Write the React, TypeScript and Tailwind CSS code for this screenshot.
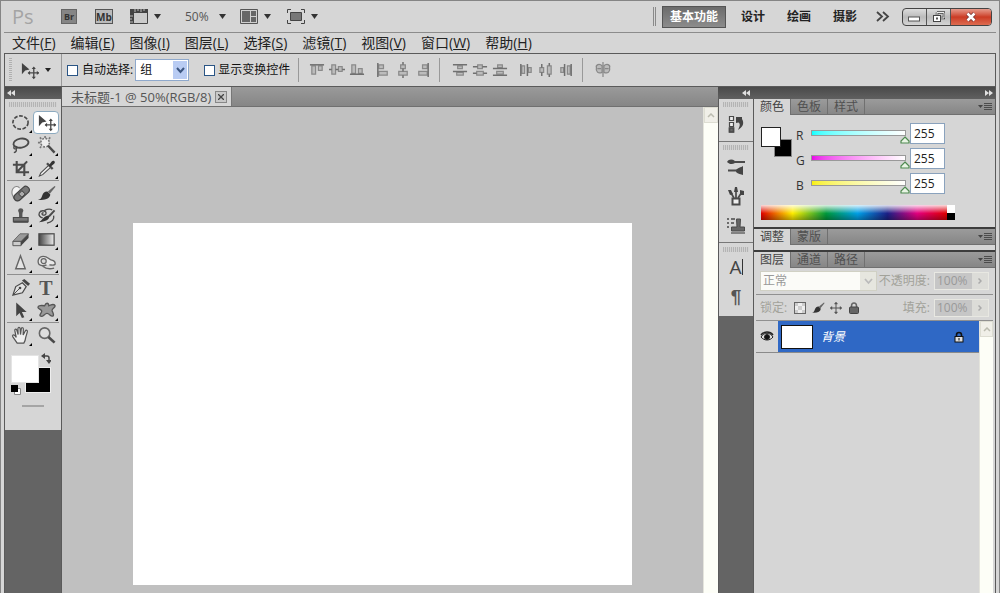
import React, { useState } from 'react';

const menus = [
  { label: '文件', key: 'F' },
  { label: '编辑', key: 'E' },
  { label: '图像', key: 'I' },
  { label: '图层', key: 'L' },
  { label: '选择', key: 'S' },
  { label: '滤镜', key: 'T' },
  { label: '视图', key: 'V' },
  { label: '窗口', key: 'W' },
  { label: '帮助', key: 'H' },
];

const workspaces = ['基本功能', '设计', '绘画', '摄影'];

interface IconProps {
  children: React.ReactNode;
  className?: string;
}

// 20x20 drawing area shared by the tool and dock icons
const Icon: React.FC<IconProps> = ({ children, className = 'w-5 h-5' }) => (
  <svg viewBox="0 0 20 20" className={`${className} shrink-0`} fill="none" stroke="#4a4a4a" strokeWidth="1.7">
    {children}
  </svg>
);

const MoveGlyph = () => (
  <>
    <path d="M2 2v12l3.500-4L10 9z" fill="#444" stroke="none" />
    <path d="M14.500 7v11M9 12.500h11" strokeWidth="1.400" />
    <path d="M14.500 5.800l-2.200 2.600h4.400zM14.500 19.200l-2.200-2.600h4.400zM8 12.500l2.600-2.200v4.400zM20 12.500l-2.300-2.200v4.400z" fill="#444" stroke="none" />
  </>
);

const BrushGlyph = () => (
  <>
    <path d="M18.500 2L11.500 8l2 2.300L19.500 3z" fill="#666" stroke="none" />
    <path d="M11 8l3 3c-.5 4-5 6.500-13 5.500 3-.6 3.500-1.500 4.500-4.500C6.500 9.500 8.500 7.700 11 8z" fill="#333" stroke="none" />
  </>
);

const StampGlyph = () => (
  <>
    <path d="M7.500 3.500a2.800 2.800 0 0 1 5.500 0c0 1.500-1 2-1 4v3H8.500v-3c0-2-1-2.500-1-4z" fill="#555" stroke="none" />
    <path d="M2.500 11h15.500v4.500H2.500z" fill="#777" strokeWidth="1.200" />
    <path d="M2.500 15.500h15.500" strokeWidth="2.200" />
  </>
);

interface Tool {
  id: string;
  name: string;
  flyout?: boolean;
  glyph: React.ReactNode;
}

const toolGroups: Tool[][] = [
  [
    { id: 'marquee', name: '椭圆选框工具', flyout: true, glyph: <ellipse cx="10" cy="10" rx="8" ry="7" strokeDasharray="4 1.600" /> },
    { id: 'move', name: '移动工具', glyph: <MoveGlyph /> },
    {
      id: 'lasso', name: '套索工具', flyout: true,
      glyph: <><ellipse cx="10.500" cy="7.500" rx="8" ry="4.800" transform="rotate(-10 10.500 7.500)" strokeWidth="2" /><path d="M4 10.500c-2 1-1 3.500 1 3s1.500-3-.5-2.500M5.500 13.500c.5 2-.5 3.500-2.500 4" strokeWidth="1.400" /></>,
    },
    {
      id: 'wand', name: '魔棒工具', flyout: true,
      glyph: <><circle cx="8.500" cy="7" r="4.500" fill="#eee" stroke="#777" strokeDasharray="2 1.500" /><path d="M8.500 0v2M1 7h2.500M3 1.500l1.500 1.500M14 1.500L12.500 3M3 12.500L4.500 11" stroke="#777" /><path d="M11.500 10l7 7.500" strokeWidth="2.500" /></>,
    },
    { id: 'crop', name: '裁剪工具', flyout: true, glyph: <path d="M6 2v12h13M2 6h12v12M6 14L17 2.500" strokeWidth="2.200" /> },
    {
      id: 'eyedropper', name: '吸管工具', flyout: true,
      glyph: <><path d="M12 7L4 14.500 2.500 18 6 16.500 14 9" fill="#eee" strokeWidth="1.100" /><path d="M10.500 4.500l6 6" strokeWidth="2.500" /><path d="M12.500 6.500l3-4c2-2 4.500.5 2.500 2.500l-4 3.500z" fill="#333" stroke="none" /></>,
    },
  ],
  [
    {
      id: 'healing', name: '污点修复画笔工具', flyout: true,
      glyph: <><path d="M5 16C1 14 0 8 2 5s5-3 7-1" stroke="#888" fill="#f4f4f4" strokeWidth="1.200" /><rect x="1.500" y="6.500" width="19" height="7.500" rx="3.700" transform="rotate(-42 11 10)" fill="#777" stroke="#444" strokeWidth="1.200" /><path d="M8 10.500l3.500-3.500 3.500 3.500-3.500 3.500z" fill="#aaa" stroke="#333" strokeWidth="1" /></>,
    },
    { id: 'brush', name: '画笔工具', flyout: true, glyph: <BrushGlyph /> },
    { id: 'stamp', name: '仿制图章工具', flyout: true, glyph: <StampGlyph /> },
    {
      id: 'history', name: '历史记录画笔工具', flyout: true,
      glyph: <><path d="M7 6.500c-1.500-1-2.500 1-1 1.800s4 0 3.500-2.300C9 3.500 4 3 2.500 6S4 11 6 11.500M8 3.500c3-1.500 6-1.500 8-.5M17.500 9c1 4-1.500 7-7 8" strokeWidth="1.400" /><path d="M18.500 3.500l-6 6.500" strokeWidth="2" /><path d="M12 9c2 2 .5 6-10 7 3.500-1.500 4-6 10-7z" fill="#333" stroke="none" /></>,
    },
    {
      id: 'eraser', name: '橡皮擦工具', flyout: true,
      glyph: <><path d="M2 12L9.500 4h9l-8 8z" fill="#999" stroke="#666" strokeWidth="1" /><path d="M2 12h8.500v4.500H2z" fill="#ccc" stroke="#555" strokeWidth="1" /><path d="M10.500 12l8-8v4.500l-8 8z" fill="#444" stroke="none" /></>,
    },
    {
      id: 'gradient', name: '渐变工具', flyout: true,
      glyph: <><defs><linearGradient id="toolGradient"><stop stopColor="#444" /><stop offset="1" stopColor="#eee" /></linearGradient></defs><rect x="2" y="4" width="16" height="12" fill="url(#toolGradient)" strokeWidth="1.300" /></>,
    },
    { id: 'sharpen', name: '锐化工具', flyout: true, glyph: <path d="M10 3L5 16.500h10z" fill="#e4e4e4" stroke="#666" strokeWidth="1.500" /> },
    {
      id: 'sponge', name: '海绵工具', flyout: true,
      glyph: <><path d="M2 12C0 8 2 3.500 6.500 3.500c5 0 6 3.500 9 4 2.500.5 4 2 3.500 4.500-2 1.500-4 .5-6 .5M2 12c3 2 6 1.500 8 .5M6 14c3 2.500 8 3 12 2" fill="#e8e8e8" stroke="#666" strokeWidth="1.400" /><circle cx="7" cy="8.500" r="2.700" fill="#d8d8d8" stroke="#666" strokeWidth="1.300" /></>,
    },
  ],
  [
    {
      id: 'pen', name: '钢笔工具', flyout: true,
      glyph: <><path d="M2 18l3-9 7-4 4 4-4 6.500z" fill="#e2e2e2" strokeWidth="1.300" /><path d="M11.500 2.500l6.500 6 2-2.500-6-5z" fill="#444" stroke="none" /><path d="M2 18l7-7" strokeWidth="1" /><circle cx="9.500" cy="10.500" r="1.400" fill="#444" stroke="none" /></>,
    },
    { id: 'type', name: '横排文字工具', flyout: true, glyph: null },
    { id: 'select', name: '路径选择工具', flyout: true, glyph: <path d="M5.500 1.500v14.500l3.500-3.500 2.500 5.500 2.500-1-2.500-5.500h5z" fill="#444" stroke="none" /> },
    {
      id: 'shape', name: '自定形状工具', flyout: true,
      glyph: <path d="M8 5c1.500-3.500 4-3.500 4.500 0 3-1.500 6-2 6.500 0s-4 3-3 5.500c1.500 3 2 5.500 0 5.500s-3-3-5.500-3-4 4-6.500 3 1-3 1-5.500c-1-2-4-2-4-4s4-2 7-1.500z" fill="#999" stroke="#555" strokeWidth="1.400" />,
    },
  ],
  [
    {
      id: 'hand', name: '抓手工具', flyout: true,
      glyph: <path d="M6.500 18L2 11.500c-1.200-2 .7-3 2-1.500l1.500 2L4 5c-.3-2 1.800-2.300 2.200-.5L7.500 9 7.300 3c0-2 2.200-2 2.300 0L10 9l.8-6c.3-1.700 2.400-1.500 2.200.3L12.800 9.500 15 5.300c1-1.600 2.700-.7 2.200.9L15.500 12c-.3 3-1 4.500-2 6z" fill="#eee" stroke="#555" strokeWidth="1.300" />,
    },
    { id: 'zoom', name: '缩放工具', glyph: <><circle cx="8" cy="7.500" r="5.500" fill="#ddd" stroke="#666" /><path d="M12 11.500l6.500 6" strokeWidth="2.800" /></> },
  ],
];

// Bars and boxes for the align and distribute buttons
const alignGroups: { name: string; d: string; line: string }[][] = [
  [
    { name: '顶对齐', d: 'M3 4h4v9H3zM10 4h4v5h-4z', line: 'M1 3h15' },
    { name: '垂直居中对齐', d: 'M3 3h4v10H3zM10 5h4v5h-4z', line: 'M0 8h3M7 8h3M14 8h3' },
    { name: '底对齐', d: 'M3 3h4v9H3zM10 7h4v5h-4z', line: 'M1 13h15' },
  ],
  [
    { name: '左对齐', d: 'M4 3h5v4H4zM4 10h9v4H4z', line: 'M3 1v15' },
    { name: '水平居中对齐', d: 'M6 3h5v4H6zM4 10h9v4H4z', line: 'M8.500 0v3M8.500 7v3M8.500 14v3' },
    { name: '右对齐', d: 'M8 3h5v4H8zM4 10h9v4H4z', line: 'M14 1v15' },
  ],
  [
    { name: '按顶分布', d: 'M6 4h5v3H6zM5 11h7v3H5z', line: 'M1 3h15M1 10h15' },
    { name: '垂直居中分布', d: 'M6 3h5v4H6zM5 10h7v4H5z', line: 'M1 5h5M11 5h5M1 12h4M12 12h4' },
    { name: '按底分布', d: 'M6 3h5v3H6zM5 10h7v3H5z', line: 'M1 7h15M1 14h15' },
  ],
  [
    { name: '按左分布', d: 'M4 4h3v8H4zM11 6h3v5h-3z', line: 'M3 2v13M10 2v13' },
    { name: '水平居中分布', d: 'M2 6h4v5H2zM10 4h4v9h-4z', line: 'M4 2v4M4 11v4M12 1v3M12 13v3' },
    { name: '按右分布', d: 'M3 6h3v5H3zM10 4h3v9h-3z', line: 'M7 2v13M14 2v13' },
  ],
];

const AlignButtons: React.FC<{ group: number }> = ({ group }) => (
  <div className="flex gap-1">
    {alignGroups[group].map(item => (
      <button key={item.name} aria-label={item.name} className="w-4">
        <svg viewBox="0 0 17 17" className="w-4 h-4" fill="none">
          <path d={item.d} fill="#bcbcbc" stroke="#8a8a8a" strokeWidth="1.300" />
          <path d={item.line} stroke="#707070" strokeWidth="1.600" />
        </svg>
      </button>
    ))}
  </div>
);

const Caret = () => (
  <svg viewBox="0 0 7 5" className="w-[7px] h-[5px] shrink-0" fill="#333">
    <path d="M0 0h7L3.500 5z" />
  </svg>
);

const DoubleArrow: React.FC<{ flip?: boolean }> = ({ flip }) => (
  <svg viewBox="0 0 8 6" className="w-2 h-1.5" fill="#e0e0e0">
    <path d={flip ? 'M0 0l4 3-4 3zM4 0l4 3-4 3z' : 'M4 0L0 3l4 3zM8 0L4 3l4 3z'} />
  </svg>
);

const Grip = () => (
  <div className="h-[5px] mx-1 bg-[repeating-linear-gradient(90deg,#b4b4b4_0px,#b4b4b4_1px,#d2d2d2_1px,#d2d2d2_2px)]" />
);

const TitleBar: React.FC = () => {
  const [workspace, setWorkspace] = useState('基本功能');

  return (
    <header className="flex items-center h-8 pl-2 pr-1 border-b border-[#8c8c8c]">
      <span className="w-[49px] text-[20px] leading-6 font-medium text-[#a4a4a4]">Ps</span>
      <button aria-label="Bridge" className="w-4 h-[15px] bg-[#858585] border border-[#666] text-[9px] leading-3 font-bold text-[#333]">Br</button>
      <button aria-label="Mini Bridge" className="w-[18px] h-[15px] ml-[18px] bg-[#bbb] border border-[#555] text-[10px] leading-3 font-bold text-[#333]">Mb</button>
      <button aria-label="查看额外内容" className="flex items-center gap-1.5 ml-[17px]">
        <svg viewBox="0 0 18 15" className="w-[18px] h-[15px]" fill="none">
          <path d="M.5.500h17v14H.500z" fill="#ccc" stroke="#444" />
          <path d="M0 0h18v4H4v11H0z" fill="#444" />
          <path d="M5 0v3M8 0v2M11 0v3M14 0v2M0 7h3M0 10h2M0 13h3" stroke="#bbb" />
        </svg>
        <Caret />
      </button>
      <button aria-label="缩放级别" className="flex items-center gap-2.5 ml-6 text-xs text-[#555]">
        50%
        <Caret />
      </button>
      <button aria-label="排列文档" className="flex items-center gap-1.5 ml-3.5">
        <svg viewBox="0 0 18 15" className="w-[18px] h-[15px]" fill="none">
          <path d="M.5.500h17v14H.500z" fill="#d0d0d0" stroke="#555" />
          <path d="M2 2h8v11H2zM11 2h5v5h-5zM11 8h5v5h-5z" fill="#666" />
        </svg>
        <Caret />
      </button>
      <button aria-label="屏幕模式" className="flex items-center gap-1.5 ml-4">
        <svg viewBox="0 0 18 15" className="w-[18px] h-[15px]" fill="none" stroke="#444">
          <path d="M.5 4V.500H4M14 .5h3.500V4M17.500 11v3.500H14M4 14.500H.500V11" />
          <path d="M3.500 3.500h11v8h-11z" fill="#777" />
        </svg>
        <Caret />
      </button>

      <div className="flex items-center ml-auto">
        <div className="w-[3px] h-[19px] mr-1.5 border-x border-[#8a8a8a]" />
        <nav className="flex items-center" aria-label="工作区">
          {workspaces.map(name => (
            <button
              key={name}
              onClick={() => setWorkspace(name)}
              className={`h-[22px] text-xs font-bold ${
                workspace === name
                  ? 'px-[7px] mr-1 bg-gradient-to-b from-[#6c6c6c] to-[#8c8c8c] border border-[#555] text-white'
                  : 'px-[11px] text-[#222]'
              }`}
            >
              {name}
            </button>
          ))}
        </nav>
        <button aria-label="更多工作区" className="ml-2 mr-3">
          <svg viewBox="0 0 14 11" className="w-3.5 h-[11px]" fill="none" stroke="#444" strokeWidth="1.800">
            <path d="M1 1l5 4.500L1 10M7 1l5 4.500L7 10" />
          </svg>
        </button>
        <div className="flex h-[18px] rounded-sm border border-[#444] overflow-hidden bg-gradient-to-b from-[#ddd] via-[#bbb] to-[#d4d4d4]">
          <button aria-label="最小化" className="flex items-center justify-center w-6 border-r border-[#555]">
            <svg viewBox="0 0 13 6" className="w-[13px] h-1.5 mt-1"><rect x=".5" y="1" width="11" height="4" fill="#fff" stroke="#555" /></svg>
          </button>
          <button aria-label="还原" className="flex items-center justify-center w-6 border-r border-[#555]">
            <svg viewBox="0 0 13 12" className="w-[13px] h-3" fill="none">
              <path d="M5 1.500h7v5.500H9M5 1.500V4" stroke="#444" strokeWidth="2.500" />
              <path d="M5 1.500h7v5.500H9M5 1.500V4" stroke="#eee" strokeWidth="1" />
              <rect x="1.500" y="4.500" width="7" height="6" stroke="#444" fill="#fff" />
              <rect x="4" y="6.500" width="2" height="2" fill="#555" />
            </svg>
          </button>
          <button aria-label="关闭" className="flex items-center justify-center w-10 bg-gradient-to-b from-[#e59a8c] via-[#cb3b24] to-[#dd6b50]">
            <svg viewBox="0 0 12 10" className="w-3 h-2.5" fill="none">
              <path d="M2.500 1.500l7 7M9.500 1.500l-7 7" stroke="#733" strokeWidth="4" />
              <path d="M2.500 1.500l7 7M9.500 1.500l-7 7" stroke="#fff" strokeWidth="2.500" />
            </svg>
          </button>
        </div>
      </div>
    </header>
  );
};

const MenuBar: React.FC = () => (
  <nav className="flex items-center gap-[15px] h-5 pl-2 text-sm leading-4 text-[#222]" aria-label="菜单">
    {menus.map(menu => (
      <button key={menu.key}>
        {menu.label}(<span className="underline">{menu.key}</span>)
      </button>
    ))}
  </nav>
);

const OptionsBar: React.FC = () => {
  const [autoSelect, setAutoSelect] = useState(false);
  const [showTransform, setShowTransform] = useState(false);

  return (
    <div className="flex items-center h-[34px] border border-[#5a5a5a] text-xs text-[#111]">
      <div className="flex items-center h-full w-[57px] pl-1 border-r border-[#999]">
        <div className="w-[3px] h-6 bg-[repeating-linear-gradient(180deg,#b0b0b0_0px,#b0b0b0_1px,#d8d8d8_1px,#d8d8d8_2px)]" />
        <button aria-label="移动工具预设" className="flex items-center gap-1.5 ml-2">
          <Icon className="w-[19px] h-[19px]"><MoveGlyph /></Icon>
          <svg viewBox="0 0 6 4" className="w-1.5 h-1" fill="#222"><path d="M0 0h6L3 4z" /></svg>
        </button>
      </div>
      <label className="flex items-center gap-1 ml-[5px]">
        <input
          type="checkbox"
          checked={autoSelect}
          onChange={e => setAutoSelect(e.target.checked)}
          className="appearance-none w-[11px] h-[11px] bg-white border border-[#2a5585] checked:bg-[#2a5585]"
        />
        自动选择:
      </label>
      <div className="relative w-[54px] h-[22px] ml-0.5">
        <select aria-label="自动选择对象" className="appearance-none w-full h-full pl-1 bg-white border border-[#8fa9cc]">
          <option>组</option>
          <option>图层</option>
        </select>
        <div className="absolute right-0.5 top-0.5 bottom-0.5 flex items-center justify-center w-3.5 bg-[#b9ccf3] pointer-events-none">
          <svg viewBox="0 0 9 7" className="w-[9px] h-[7px]" fill="none" stroke="#3c5680" strokeWidth="2"><path d="M1 1l3.500 4L8 1" /></svg>
        </div>
      </div>
      <label className="flex items-center gap-[3px] ml-[15px]">
        <input
          type="checkbox"
          checked={showTransform}
          onChange={e => setShowTransform(e.target.checked)}
          className="appearance-none w-[11px] h-[11px] bg-white border border-[#2a5585] checked:bg-[#2a5585]"
        />
        显示变换控件
      </label>
      <div className="w-px h-6 ml-2 mr-2.5 bg-[#999]" />
      <AlignButtons group={0} />
      <div className="w-2.5" />
      <AlignButtons group={1} />
      <div className="w-px h-6 ml-2 mr-3 bg-[#999]" />
      <AlignButtons group={2} />
      <div className="w-2.5" />
      <AlignButtons group={3} />
      <div className="w-px h-6 ml-2 mr-2.5 bg-[#999]" />
      <button aria-label="自动对齐图层">
        <svg viewBox="0 0 20 17" className="w-5 h-4" fill="#bcbcbc" stroke="#888" strokeWidth="1.300">
          <path d="M9 4C6 1 2 3 3 6c-1 4 2 7 6 5zM11 4c3-3 7-1 6 2 1 4-2 7-6 5z" />
          <path d="M10 0v16M4 7h4M12 7h4" />
        </svg>
      </button>
    </div>
  );
};

const Toolbox: React.FC = () => {
  const [active, setActive] = useState('move');

  return (
    <aside className="flex flex-col w-[58px] shrink-0 bg-[#646464] border-x border-[#5a5a5a]">
      <div className="flex items-center h-3 pl-0.5 bg-gradient-to-b from-[#4a4a4a] to-[#606060]">
        <DoubleArrow />
      </div>
      <div className="flex flex-col pt-[3px] pb-[23px] bg-[#d6d6d6]">
        <Grip />
        <div className="mt-1">
          {toolGroups.map((group, index) => (
            <div
              key={group[0].id}
              className={`grid grid-cols-[26px_26px] mx-0.5 ${index > 0 ? 'border-t border-[#8f8f8f] pt-px' : ''}`}
            >
              {group.map(tool => (
                <button
                  key={tool.id}
                  aria-label={tool.name}
                  onClick={() => setActive(tool.id)}
                  className={`relative flex items-center justify-center h-[23px] rounded-sm border ${
                    active === tool.id ? 'bg-white border-[#8daabf]' : 'border-transparent'
                  }`}
                >
                  {tool.id === 'type' ? (
                    <span className="font-['Liberation_Serif',serif] text-[20px] leading-5 font-bold text-[#555]">T</span>
                  ) : (
                    <Icon className="w-[19px] h-[19px]">{tool.glyph}</Icon>
                  )}
                  {tool.flyout && (
                    <svg viewBox="0 0 3 3" className="absolute right-0 bottom-0 w-[3px] h-[3px]"><path d="M3 0v3H0z" /></svg>
                  )}
                </button>
              ))}
            </div>
          ))}
        </div>
        {/* Foreground / background colours */}
        <div className="relative h-11 mt-1.5 mx-1.5">
          <button aria-label="背景色" className="absolute left-3.5 top-3.5 w-[26px] h-[26px] bg-black border border-[#eee]" />
          <button aria-label="前景色" className="absolute left-0 top-0.5 w-[28px] h-[28px] bg-white border border-[#e4e4e4]" />
          <button aria-label="切换颜色" className="absolute left-[30px] top-0">
            <svg viewBox="0 0 10 11" className="w-2.5 h-[11px]" fill="#444">
              <path d="M0 3l4-3v6zM8 11L5 7h6z" />
              <path d="M3 3h3q2 0 2 2v3" fill="none" stroke="#444" strokeWidth="1.500" />
            </svg>
          </button>
          <button aria-label="默认颜色" className="absolute left-0 top-8">
            <svg viewBox="0 0 10 10" className="w-2.5 h-2.5">
              <path d="M3.500 3.500h6v6h-6z" fill="#fff" stroke="#888" />
              <path d="M0 0h7v7H0z" />
            </svg>
          </button>
        </div>
        <div className="w-[22px] h-0.5 mt-2 mx-auto bg-[#a5a5a5]" />
      </div>
    </aside>
  );
};

const ScrollUp = () => (
  <button aria-label="向上滚动" className="flex items-center justify-center w-full h-4 bg-[#f0efe8] border border-[#ddddd2]">
    <svg viewBox="0 0 8 5" className="w-2 h-[5px]" fill="none" stroke="#bcbcb0" strokeWidth="1.500"><path d="M1 4l3-3 3 3" /></svg>
  </button>
);

const DocumentView: React.FC = () => (
  <main className="flex flex-col flex-1 min-w-0">
    <div className="flex h-5 bg-gradient-to-b from-[#9a9a9a] to-[#868686] border-b border-[#707070]">
      <div className="flex items-center gap-1 pl-[9px] pr-1 bg-[#d6d6d6] border-r border-[#777] text-[13px] leading-4 text-[#555]">
        <span className="whitespace-nowrap">未标题-1 @ 50%(RGB/8)</span>
        <button aria-label="关闭文档" className="flex items-center justify-center w-3 h-3 bg-[#c8c8c8] border border-[#888]">
          <svg viewBox="0 0 6 6" className="w-1.5 h-1.5" stroke="#444" strokeWidth="1.300"><path d="M0 0l6 6M6 0L0 6" /></svg>
        </button>
      </div>
    </div>
    <div className="flex flex-1 min-h-0 bg-[#c0c0c0]">
      <div className="flex flex-col flex-1 pt-29 pb-2">
        <div className="flex-1 w-[78%] mx-auto bg-white" />
      </div>
      <div className="w-[15px] bg-[#fdfef7] border-l border-[#e4e4dc]">
        <ScrollUp />
      </div>
    </div>
  </main>
);

const DockStrip: React.FC = () => (
  <div className="w-9 shrink-0 bg-[#646464] border-x border-[#5a5a5a]">
    <div className="flex flex-col items-center h-[43px] bg-[#d6d6d6] border-b border-[#777]">
      <div className="w-full pt-[3px]"><Grip /></div>
      <button aria-label="历史记录" className="my-auto">
        <Icon>
          <path d="M3.500 2.500h4v4h-4zM3.500 8.500h4v4h-4zM3.500 14h4v4h-4z" strokeWidth="1.200" fill="#eee" />
          <path d="M3.500 14h4v4h-4z" fill="#666" />
          <path d="M10 3h6v2c2.500 4 1 8-4 11 2-4 2.500-6 .5-7.500L10 9z" fill="#444" stroke="none" />
        </Icon>
      </button>
    </div>
    <div className="flex flex-col items-center h-[101px] bg-[#d6d6d6] border-b border-[#777]">
      <div className="w-full pt-[3px]"><Grip /></div>
      <div className="flex flex-col justify-between flex-1 py-1.5">
        <button aria-label="画笔预设">
          <Icon>
            <path d="M1 6c2-3 5-3 8-1v2C6 9 3 8 1 6zM10 14c3-3 6-3 7-4v9c-2-1-5-1-7-3z" fill="#444" stroke="none" />
            <path d="M8 6h11M2 14.500h9" strokeWidth="2" />
          </Icon>
        </button>
        <button aria-label="画笔">
          <Icon>
            <path d="M6.500 12.500h7v6h-7z" fill="#eee" strokeWidth="2" />
            <path d="M8 12L5 7M10 12V5M12 12l4-6" />
            <path d="M2 4l3 0 2 4-3 1zM9 1h2l1 5H8zM14 4l4 1v4l-4 0z" fill="#444" stroke="none" />
          </Icon>
        </button>
        <button aria-label="仿制源">
          <Icon>
            <path d="M1 3h2M5 3h4M1 7h2M5 7h3M1 11h2" />
            <path d="M10.500 3h4l-.5 8h4.500v4h-13v-4H11z" fill="#666" strokeWidth="1" />
            <path d="M5 17h14" strokeWidth="1.200" />
          </Icon>
        </button>
      </div>
    </div>
    <div className="flex flex-col items-center h-[73px] bg-[#d6d6d6]">
      <div className="w-full pt-1"><Grip /></div>
      <button aria-label="字符" className="flex items-center h-[30px] text-[19px] leading-6 font-medium text-[#444]">
        A<span className="w-px h-4 bg-[#333]" />
      </button>
      <button aria-label="段落" className="h-[30px] font-['Liberation_Sans',sans-serif] text-[19px] leading-6 font-bold text-[#555]">¶</button>
    </div>
  </div>
);

interface PanelTabsProps {
  tabs: string[];
}

const PanelTabs: React.FC<PanelTabsProps> = ({ tabs }) => {
  const [current, setCurrent] = useState(tabs[0]);

  return (
    <div className="flex h-4 bg-gradient-to-b from-[#9b9b9b] to-[#858585] text-xs leading-4">
      {tabs.map(tab => (
        <button
          key={tab}
          onClick={() => setCurrent(tab)}
          className={`w-[37px] border-r border-[#707070] ${
            current === tab ? 'bg-[#d6d6d6] text-[#444]' : 'border-b text-[#505050]'
          }`}
        >
          {tab}
        </button>
      ))}
      <div className="flex flex-1 items-center justify-end pr-[3px] border-b border-[#707070]">
        <button aria-label="面板菜单">
          <svg viewBox="0 0 14 9" className="w-3.5 h-[9px]" stroke="#444">
            <path d="M0 3h5L2.500 6z" fill="#444" stroke="none" />
            <path d="M6 1.500h8M6 3.500h8M6 5.500h8M6 7.500h8" strokeWidth=".9" />
          </svg>
        </button>
      </div>
    </div>
  );
};

const channels = [
  { id: 'R', track: 'bg-gradient-to-r from-[#00ffff] to-white' },
  { id: 'G', track: 'bg-gradient-to-r from-[#e800e8] to-white' },
  { id: 'B', track: 'bg-gradient-to-r from-[#f8f000] to-white' },
];

const ColorPanel: React.FC = () => {
  const [values, setValues] = useState<Record<string, number>>({ R: 255, G: 255, B: 255 });

  const update = (id: string, value: number) => {
    setValues(prev => ({ ...prev, [id]: Math.max(0, Math.min(255, value || 0)) }));
  };

  return (
    <section className="px-[7px] pt-2 pb-[7px] text-xs">
      <div className="flex">
        <div className="relative w-[31px] h-8 mt-1">
          <div className="absolute right-0 bottom-0.5 w-[18px] h-[18px] bg-black border border-[#888]" />
          <div className="absolute left-0 top-0 w-5 h-5 bg-white border border-[#222]" />
        </div>
        <div className="flex flex-col gap-1 ml-1">
          {channels.map(channel => (
            <div key={channel.id} className="flex items-end h-[21px]">
              <label htmlFor={`channel-${channel.id}`} className="w-[15px] text-[#333]">{channel.id}</label>
              <div className="relative w-[95px] h-3.5">
                <div className={`h-1.5 border border-[#999] ${channel.track}`} />
                <svg
                  viewBox="0 0 10 8"
                  className="absolute top-1.5 w-2.5 h-2 -ml-1.5"
                  style={{ left: `${(values[channel.id] / 255) * 100}%` }}
                >
                  <path d="M5 1l4 4v2H1V5z" fill="#e8f4e4" stroke="#4f8a50" strokeWidth="1.200" />
                </svg>
                <input
                  type="range"
                  min="0"
                  max="255"
                  aria-label={`${channel.id} 滑块`}
                  value={values[channel.id]}
                  onChange={e => update(channel.id, Number(e.target.value))}
                  className="absolute inset-0 w-full h-full opacity-0"
                />
              </div>
              <input
                id={`channel-${channel.id}`}
                type="text"
                value={values[channel.id]}
                onChange={e => update(channel.id, Number(e.target.value))}
                className="w-[35px] h-[21px] ml-1 pl-[3px] bg-white border border-[#8aa2bd] text-[#222]"
              />
            </div>
          ))}
        </div>
      </div>
      <div className="flex w-[194px] h-[15px] mt-[11px]">
        <div className="flex-1 bg-[linear-gradient(180deg,rgba(255,255,255,0.85),transparent_55%,rgba(0,0,0,0.3)),linear-gradient(90deg,#e00000,#ffee00_17%,#009a3c_35%,#00a0e8_52%,#1c2088_68%,#e4007f_84%,#e00000)]" />
        <div className="flex flex-col w-2">
          <div className="flex-1 bg-white" />
          <div className="flex-1 bg-black" />
        </div>
      </div>
    </section>
  );
};

const PercentField: React.FC<{ id: string; label: string }> = ({ id, label }) => (
  <div className="flex items-center gap-1 ml-auto">
    <label htmlFor={id} className="text-[#a2a29a]">{label}</label>
    <div className="flex h-[18px] border border-[#e8e8e2]">
      <input id={id} type="text" disabled defaultValue="100%" className="w-[37px] px-0.5 bg-[#c6c6c6] text-[#999]" />
      <button disabled aria-label={`${label}滑块`} className="flex items-center justify-center w-4 bg-[#dcdcd8]">
        <svg viewBox="0 0 4 6" className="w-1 h-1.5" fill="none" stroke="#aaa" strokeWidth="1.500"><path d="M.5.500L3 3 .5 5.500" /></svg>
      </button>
    </div>
  </div>
);

const LayersPanel: React.FC = () => (
  <section className="flex flex-col flex-1 min-h-0 text-xs">
    <div className="flex items-center h-[27px] mx-0.5 px-1 border-b border-[#909090]">
      <div className="relative w-[117px] h-5">
        <select disabled aria-label="混合模式" className="appearance-none w-full h-full pl-0.5 bg-[#fbfbf8] border border-[#d0d0c4] text-[#999] opacity-100">
          <option>正常</option>
        </select>
        <div className="absolute right-px top-px bottom-px flex items-center justify-center w-4 bg-[#e6e6df] pointer-events-none">
          <svg viewBox="0 0 9 7" className="w-[9px] h-[7px]" fill="none" stroke="#bbb" strokeWidth="1.800"><path d="M1 1l3.500 4L8 1" /></svg>
        </div>
      </div>
      <PercentField id="opacity" label="不透明度:" />
    </div>
    <div className="flex items-center h-[26px] mx-0.5 px-1 border-b border-[#909090]">
      <span className="text-[#a2a29a]">锁定:</span>
      <div className="flex items-center gap-1 ml-1.5">
        <button disabled aria-label="锁定透明像素">
          <svg viewBox="0 0 14 14" className="w-3.5 h-3.5"><rect x="1.500" y="1.500" width="11" height="11" fill="#eee" stroke="#666" /><path d="M2 2h3v3H2zM5 5h4v4H5zM9 9h3v3H9zM9 2h3v3H9zM2 9h3v3H2z" fill="#ccc" /></svg>
        </button>
        <button disabled aria-label="锁定图像像素">
          <Icon className="w-3.5 h-3.5"><BrushGlyph /></Icon>
        </button>
        <button disabled aria-label="锁定位置">
          <svg viewBox="0 0 14 14" className="w-3.5 h-3.5" fill="#555" stroke="#555"><path d="M7 2v10M2 7h10" /><path d="M7 1L5.500 3h3zM7 13l-1.500-2h3zM1 7l2-1.500v3zM13 7l-2-1.500v3z" strokeWidth=".5" /></svg>
        </button>
        <button disabled aria-label="锁定全部">
          <svg viewBox="0 0 14 14" className="w-3.5 h-3.5"><path d="M4.500 7V5a2.500 3 0 0 1 5 0v2" fill="none" stroke="#666" strokeWidth="1.500" /><rect x="2.500" y="6" width="9" height="6.500" rx="1" fill="#666" stroke="#444" /></svg>
        </button>
      </div>
      <PercentField id="fill" label="填充:" />
    </div>
    <div className="flex flex-1 min-h-0 ml-0.5 mr-0.5">
      <ul className="flex-1">
        <li className="flex h-8 border-b border-[#8a8a8a]">
          <button aria-label="显示图层" className="flex items-center justify-center w-[22px]">
            <svg viewBox="0 0 14 12" className="w-3.5 h-3" fill="none" stroke="#222">
              <path d="M1 6c3-5 9-5 12 0-3 4-9 4-12 0z" fill="#ddd" />
              <path d="M1 4c3-4 9-4 12 0" strokeWidth="1.500" />
              <circle cx="7" cy="6" r="2.500" fill="#111" />
            </svg>
          </button>
          <button className="flex flex-1 items-center pl-[3px] pr-3.5 bg-[#2f68c5] text-white">
            <span className="w-8 h-6 mr-2 bg-white border border-[#111]" />
            <span className="italic">背景</span>
            <svg viewBox="0 0 12 12" className="w-3 h-3 ml-auto">
              <path d="M3.500 6V4a2.500 2.500 0 0 1 5 0v2" fill="none" stroke="#111" strokeWidth="1.600" />
              <rect x="2" y="5.500" width="8" height="5.500" fill="#ddd" stroke="#111" />
              <path d="M6 7v2.500" stroke="#111" />
            </svg>
          </button>
        </li>
      </ul>
      <div className="w-3.5 bg-[#fdfef7] border-l border-[#e4e4dc]">
        <ScrollUp />
      </div>
    </div>
  </section>
);

export default function App() {
  return (
    <div className="flex flex-col h-screen px-[3px] overflow-hidden bg-[#d6d6d6] border border-b-0 border-[#858585] font-['Open_Sans','Noto_Sans_CJK_SC',sans-serif]">
      <TitleBar />
      <MenuBar />
      <OptionsBar />
      <div className="flex flex-1 min-h-0">
        <Toolbox />
        <DocumentView />
        <div className="flex flex-col border-r border-[#5a5a5a]">
          <div className="flex items-center justify-between h-3 pl-6 pr-0.5 bg-gradient-to-b from-[#4a4a4a] to-[#606060]">
            <DoubleArrow />
            <DoubleArrow flip />
          </div>
          <div className="flex flex-1 min-h-0">
            <DockStrip />
            <div className="flex flex-col w-[241px]">
              <PanelTabs tabs={['颜色', '色板', '样式']} />
              <ColorPanel />
              <div className="h-0.5 bg-[#3c3c3c]" />
              <PanelTabs tabs={['调整', '蒙版']} />
              <div className="h-[5px]" />
              <div className="h-0.5 bg-[#3c3c3c]" />
              <PanelTabs tabs={['图层', '通道', '路径']} />
              <LayersPanel />
            </div>
          </div>
        </div>
      </div>
    </div>
  );
}
